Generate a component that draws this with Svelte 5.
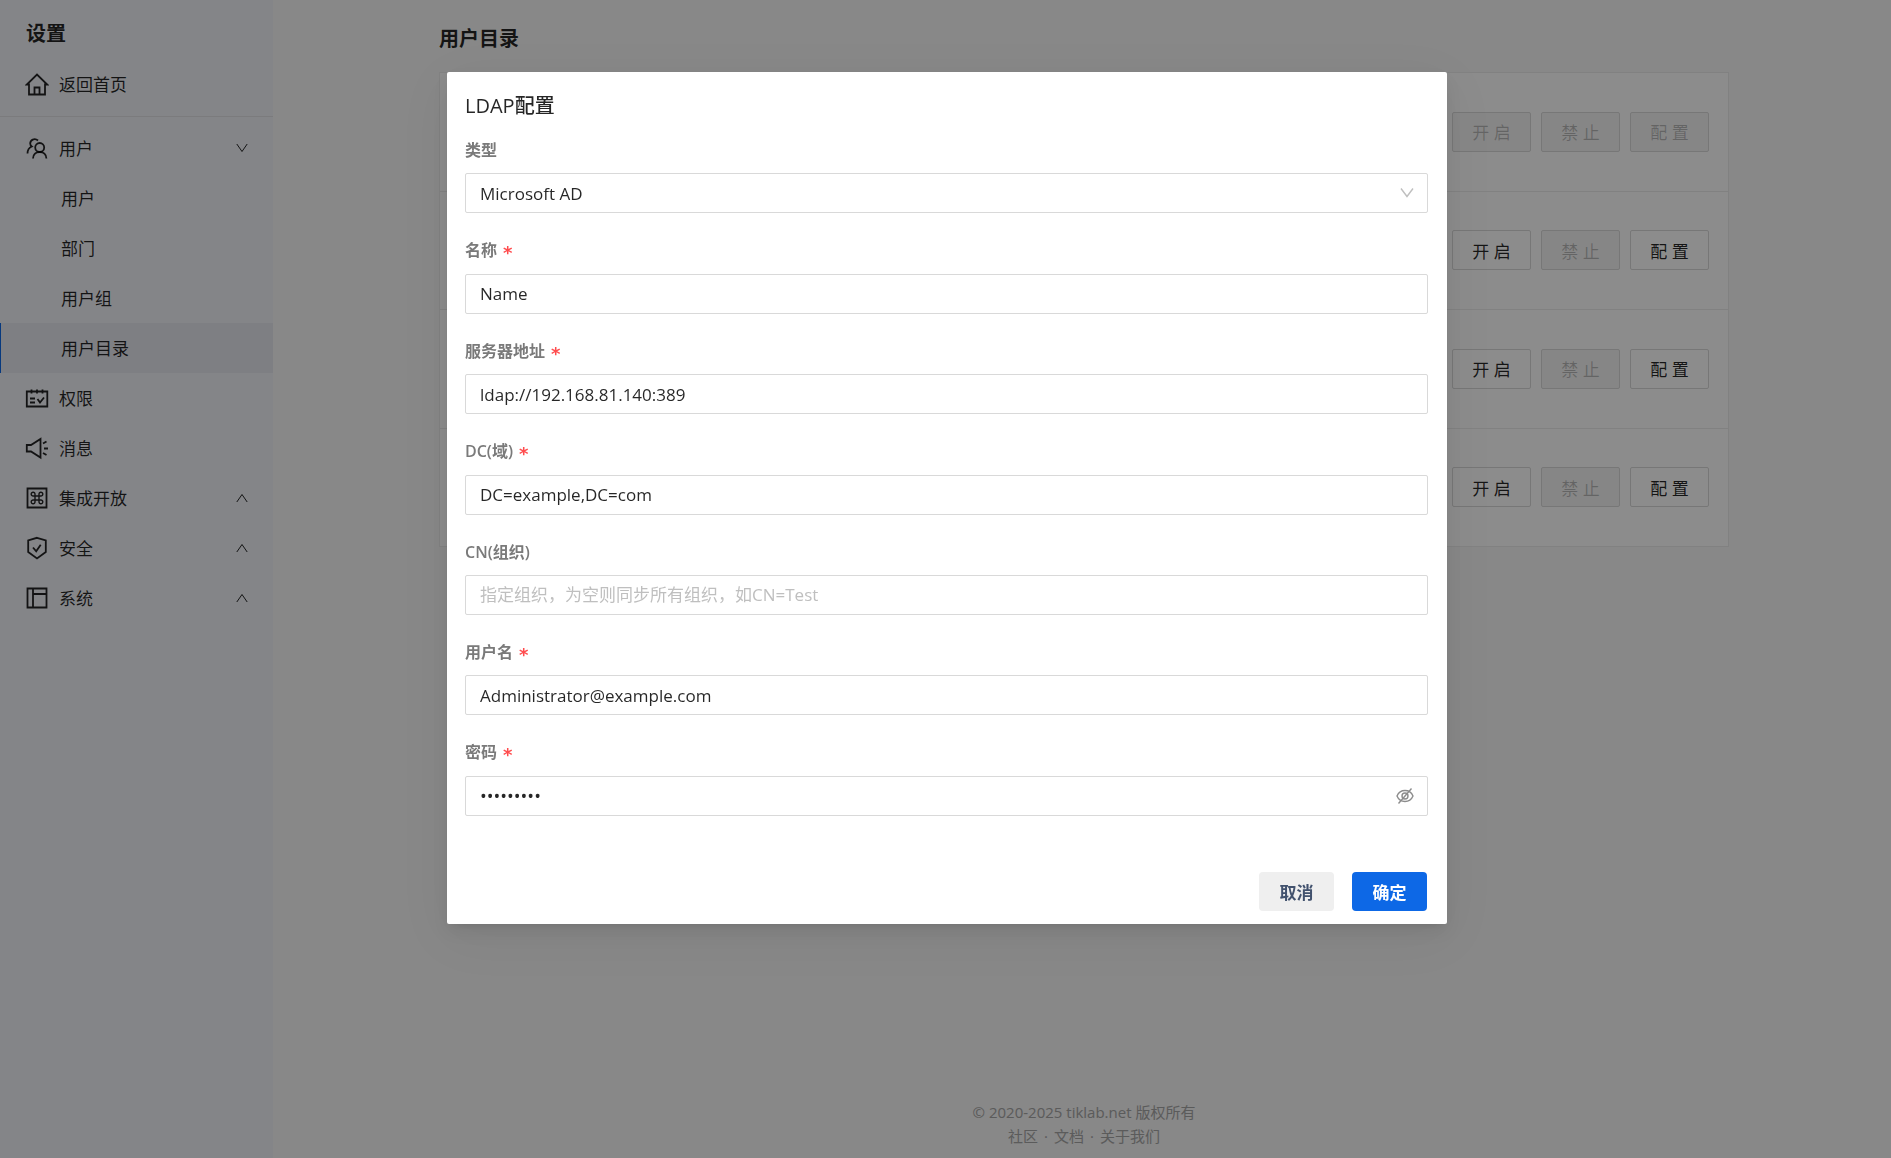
<script>
    let type = "Microsoft AD"
    let password = "ldap12345"

    const subMenu = ["用户", "部门", "用户组", "用户目录"]
    let active = "用户目录"

    const menu = [
        {name: "权限", icon: "auth"},
        {name: "消息", icon: "message"},
        {name: "集成开放", icon: "open", fold: true},
        {name: "安全", icon: "security", fold: true},
        {name: "系统", icon: "system", fold: true}
    ]

    // the built-in directory cannot be switched or configured
    const directories = [
        {id: 0, open: false, forbid: false, config: false},
        {id: 1, open: true, forbid: false, config: true},
        {id: 2, open: true, forbid: false, config: true},
        {id: 3, open: true, forbid: false, config: true}
    ]

    const fields = [
        {id: "name", label: "名称", required: true, value: "Name"},
        {id: "server", label: "服务器地址", required: true, value: "ldap://192.168.81.140:389"},
        {id: "dc", label: "DC(域)", required: true, value: "DC=example,DC=com"},
        {id: "cn", label: "CN(组织)", required: false, value: "", placeholder: "指定组织，为空则同步所有组织，如CN=Test"},
        {id: "user", label: "用户名", required: true, value: "Administrator@example.com"}
    ]
</script>

<div class="layout">
    <aside class="sidebar">
        <h2 class="side-title">设置</h2>
        <a class="item" href="#home">
            <svg class="icon" viewBox="0 0 24 24">
                <path d="M4 12.500H1.800L12 2.500l10.200 10H20V22.500H4zM9.500 22v-6.500h5V22"/>
            </svg>
            <span>返回首页</span>
        </a>
        <nav class="menu">
            <a class="item" href="#users">
                <svg class="icon" viewBox="0 0 24 24">
                    <circle cx="14.700" cy="11.500" r="4.500"/>
                    <path d="M8 22.500c0-4 3-6.500 6.700-6.500s6.700 2.500 6.700 6.500M13 4.500C9.500 1.500 5.200 4 5.200 7.500c0 1.200.6 2.300 1.600 3C4 11.700 2.500 14 2.500 17.500"/>
                </svg>
                <span>用户</span>
                <svg class="arrow" viewBox="0 0 12 12"><path d="M.8 2 6 9.500 11.200 2"/></svg>
            </a>
            {#each subMenu as name}
                <a class="item sub" class:active={name === active} href="#{name}"><span>{name}</span></a>
            {/each}
            {#each menu as item}
                <a class="item" href="#{item.icon}">
                    <svg class="icon" viewBox="0 0 24 24">
                        {#if item.icon === "auth"}
                            <path d="M1.800 5.500h20.500v15H1.800zM6.500 3.500v4M12 3.500v4M17.500 3.500v4M5 12.500h5M5 16.500h5M12.500 13l2.500 3.500 4-5"/>
                        {:else if item.icon === "message"}
                            <path d="M1.800 9H6l9.500-6v18.500L6 15.500H1.800zM18 7.500l3.500-2M19 12.500h4M18 17l3.500 2"/>
                        {:else if item.icon === "open"}
                            <path d="M2.500 2.500h19v19h-19z"/>
                            <path class="thin" d="M10 10h4v4h-4zM10 10H8.200A1.900 1.900 0 1 1 10 8.200zM14 10V8.200A1.900 1.900 0 1 1 15.800 10zM14 14h1.800A1.900 1.900 0 1 1 14 15.800zM10 14v1.800A1.900 1.900 0 1 1 8.200 14z"/>
                        {:else if item.icon === "security"}
                            <path d="M12 1.800 20.800 4.500v11.500L12 22.500 3.200 16V4.500zM8 11.500l3.200 3.800 4.500-6.500"/>
                        {:else}
                            <path d="M2.500 2.500h19v19h-19zM8 2.500v19M8 8h13.500"/>
                        {/if}
                    </svg>
                    <span>{item.name}</span>
                    {#if item.fold}
                        <svg class="arrow" viewBox="0 0 12 12"><path d="M.8 10 6 2.500l5.200 7.500"/></svg>
                    {/if}
                </a>
            {/each}
        </nav>
    </aside>

    <main class="main">
        <div class="content">
            <h2 class="page-title">用户目录</h2>
            <div class="directories">
                {#each directories as dir (dir.id)}
                    <div class="directory">
                        <button class="btn" disabled={!dir.open}>开 启</button>
                        <button class="btn" disabled={!dir.forbid}>禁 止</button>
                        <button class="btn" disabled={!dir.config}>配 置</button>
                    </div>
                {/each}
            </div>
        </div>
        <footer class="footer">
            <div>© 2020-2025 tiklab.net 版权所有</div>
            <div class="links">
                <a href="#community">社区</a>
                <span>·</span>
                <a href="#docs">文档</a>
                <span>·</span>
                <a href="#about">关于我们</a>
            </div>
        </footer>
    </main>
</div>

<div class="mask">
    <form class="modal" role="dialog" aria-labelledby="modal-title" on:submit|preventDefault>
        <h3 id="modal-title" class="modal-title">LDAP配置</h3>
        <div class="field">
            <label for="type">类型</label>
            <div class="control">
                <select id="type" bind:value={type}>
                    <option>Microsoft AD</option>
                    <option>OpenLDAP</option>
                </select>
                <svg class="suffix caret" viewBox="0 0 18 18"><path d="M3 4.500l6 8 6-8"/></svg>
            </div>
        </div>
        {#each fields as field (field.id)}
            <div class="field">
                <label for={field.id}>{field.label}{#if field.required}<span class="star">*</span>{/if}</label>
                <input id={field.id} type="text" bind:value={field.value} placeholder={field.placeholder}>
            </div>
        {/each}
        <div class="field">
            <label for="password">密码<span class="star">*</span></label>
            <div class="control">
                <input id="password" type="password" bind:value={password}>
                <svg class="suffix" viewBox="0 0 18 18">
                    <path d="M1 9c1.500-3.500 4.500-5.500 8-5.500s6.500 2 8 5.500c-1.500 3.500-4.500 5.500-8 5.500S2.500 12.500 1 9z"/>
                    <circle cx="9" cy="9" r="3"/>
                    <path d="M2.500 16.500l13-15"/>
                </svg>
            </div>
        </div>
        <div class="actions">
            <button type="button" class="action">取消</button>
            <button type="submit" class="action primary">确定</button>
        </div>
    </form>
</div>

<style>
    :global(body) {
        font-family: "Open Sans", "Noto Sans CJK SC", sans-serif;
        font-size: 17px;
        color: rgba(0, 0, 0, 0.85);
    }
    h2, h3 {
        margin: 0;
        font-size: 20px;
        line-height: 30px;
    }
    a {
        color: inherit;
        text-decoration: none;
    }
    button, input, select {
        box-sizing: border-box;
        font: inherit;
        color: inherit;
    }
    svg {
        fill: none;
        stroke: currentColor;
        flex: none;
    }

    .layout {
        display: flex;
        min-height: 100vh;
        background: #f7f7f7;
    }
    .sidebar {
        width: 273px;
        flex: none;
        background: #f0f2f7;
    }
    .side-title {
        padding: 19px 26px 10px;
    }
    .item {
        display: flex;
        align-items: center;
        gap: 10px;
        height: 50px;
        padding: 0 25px;
    }
    .item span {
        padding-bottom: 2px;
    }
    .icon {
        width: 24px;
        height: 24px;
        stroke-width: 1.8;
    }
    .thin {
        stroke-width: 1.4;
    }
    .arrow {
        width: 12px;
        height: 12px;
        margin-left: auto;
    }
    .menu {
        margin-top: 7px;
        padding-top: 6px;
        border-top: 1px solid #e0e1e4;
    }
    .sub {
        padding-left: 60px;
        border-left: 1px solid transparent;
    }
    .active {
        background: #e5e7ee;
        border-left-color: #0d68e6;
    }

    .main {
        display: flex;
        flex: 1;
        flex-direction: column;
        align-items: center;
        justify-content: space-between;
        padding: 24px 20px 10px 24px;
    }
    .content {
        width: 100%;
        max-width: 1290px;
    }
    .page-title {
        margin-bottom: 18px;
    }
    .directories {
        display: grid;
        grid-auto-rows: 1fr;
        box-sizing: border-box;
        min-height: 475px;
        background: #fff;
        border: 1px solid #ececec;
        border-bottom: 0;
    }
    .directory {
        display: flex;
        align-items: center;
        justify-content: flex-end;
        gap: 10px;
        padding-right: 19px;
        border-bottom: 1px solid #ececec;
    }
    .btn {
        width: 79px;
        height: 40px;
        padding: 0;
        background: #fff;
        border: 1px solid #d9d9d9;
        border-radius: 2px;
    }
    .btn:disabled {
        color: rgba(0, 0, 0, 0.25);
        background: #f5f5f5;
    }
    .footer {
        font-size: 15px;
        line-height: 24px;
        text-align: center;
        color: #a6a6a6;
    }
    .links {
        display: flex;
        justify-content: center;
        gap: 6px;
    }

    .mask {
        position: fixed;
        inset: 0;
        display: flex;
        align-items: flex-start;
        justify-content: center;
        padding: 72px 0 0 3px;
        overflow: auto;
        background: rgba(0, 0, 0, 0.45);
    }
    .modal {
        box-sizing: border-box;
        width: 1000px;
        padding: 19px 19px 13px 18px;
        background: #fff;
        border-radius: 2px;
        box-shadow: 0 4px 8px -5px rgba(0, 0, 0, 0.12), 0 8px 20px rgba(0, 0, 0, 0.08), 0 12px 60px 10px rgba(0, 0, 0, 0.05);
    }
    .modal-title {
        margin-bottom: 18px;
        font-weight: 500;
    }
    .field {
        margin-bottom: 26px;
    }
    .field label {
        display: block;
        margin-bottom: 12px;
        font-size: 16px;
        font-weight: 600;
        line-height: 1.4;
        color: #7a7a7a;
    }
    .star {
        margin-left: 6px;
        font-family: "DejaVu Sans", sans-serif;
        font-size: 18px;
        line-height: 0;
        vertical-align: -3px;
        color: #ff4d4f;
    }
    .field input, .field select {
        display: block;
        width: 100%;
        height: 40px;
        padding: 0 14px;
        background: #fff;
        border: 1px solid #d9d9d9;
        border-radius: 2px;
        outline: none;
        appearance: none;
    }
    .field input[type="password"] {
        font-size: 18px;
    }
    .field input::placeholder {
        color: #bfbfbf;
    }
    .control {
        position: relative;
    }
    .suffix {
        position: absolute;
        top: 11px;
        right: 14px;
        width: 18px;
        height: 18px;
        stroke-width: 1.4;
        color: #8c8c8c;
    }
    .caret {
        right: 12px;
        color: #bfbfbf;
    }
    .actions {
        display: flex;
        justify-content: flex-end;
        gap: 18px;
        margin: 56px 1px 0 0;
    }
    .action {
        width: 75px;
        height: 39px;
        padding: 0;
        font-weight: 600;
        color: #42526e;
        background: #efefef;
        border: 0;
        border-radius: 4px;
    }
    .primary {
        color: #fff;
        background: #0d68e6;
    }
</style>
